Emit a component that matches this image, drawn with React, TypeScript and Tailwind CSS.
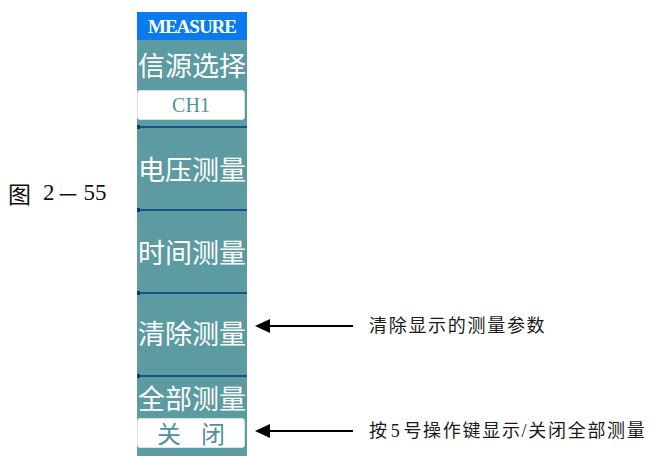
const teal = "bg-[#5c9ba1]";

function Sep() {
  return (
    <div className="relative h-[2px] w-full bg-[#1d4f8b]">
      <div className="absolute left-0 top-[-1px] h-[4px] w-[3px] bg-[#10386a]" />
    </div>
  );
}

function Label({ text }: { text: string }) {
  return (
    <div className="whitespace-nowrap text-center text-[27px] leading-none text-white [font-family:'Noto_Sans_CJK_SC',sans-serif]">
      {text}
    </div>
  );
}

function Arrow() {
  return (
    <svg width="98" height="20" viewBox="0 0 98 20" className="shrink-0">
      <polygon points="0,10 15,3 15,17" fill="#000" />
      <rect x="14" y="9" width="84" height="2" fill="#000" />
    </svg>
  );
}

function Note({ children }: { children: React.ReactNode }) {
  return (
    <div className="flex h-[20px] items-center">
      <Arrow />
      <span className="ml-[16px] whitespace-nowrap text-[18px] leading-none tracking-[1.7px] text-[#1a1a1a]">
        {children}
      </span>
    </div>
  );
}

export default function App() {
  return (
    <div className="h-[456px] w-[650px] overflow-hidden bg-white pt-[12px] [font-family:'Liberation_Serif','Noto_Sans_CJK_SC',serif]">
      {/* header */}
      <div className="flex">
        <div className="w-[137px]" />
        <div className="flex h-[28px] w-[110px] items-center justify-center bg-[#0a7af0]">
          <span className="text-[19px] font-bold leading-none tracking-[-1px] text-white">
            MEASURE
          </span>
        </div>
      </div>

      {/* 信源选择 */}
      <div className="flex">
        <div className="w-[137px]" />
        <div className={`flex h-[86px] w-[110px] flex-col ${teal}`}>
          <div className="flex h-[48px] items-center justify-center">
            <Label text="信源选择" />
          </div>
          <div className="mt-[2px] mr-[2px] flex h-[30px] items-center justify-center rounded-[3px] border border-[#d8e4e6] bg-white">
            <span className="text-[20px] leading-none text-[#4f9199]">CH1</span>
          </div>
        </div>
      </div>

      {/* 电压测量 */}
      <div className="flex">
        <div className="flex w-[137px] items-end pb-[4px] pl-[8px]">
          <div className="flex items-center text-[23px] leading-[24px] text-[#111]">
            <span className="[font-family:'Noto_Sans_CJK_SC',sans-serif]">图</span>
            <span className="ml-[12px]">2</span>
            <span className="ml-[2px] [font-family:'Noto_Sans_CJK_SC',sans-serif]">－</span>
            <span className="ml-[4px]">55</span>
          </div>
        </div>
        <div className={`flex h-[83px] w-[110px] flex-col ${teal}`}>
          <Sep />
          <div className="flex flex-1 items-center justify-center">
            <Label text="电压测量" />
          </div>
        </div>
      </div>

      {/* 时间测量 */}
      <div className="flex">
        <div className="w-[137px]" />
        <div className={`flex h-[83px] w-[110px] flex-col ${teal}`}>
          <Sep />
          <div className="flex flex-1 items-center justify-center">
            <Label text="时间测量" />
          </div>
        </div>
      </div>

      {/* 清除测量 */}
      <div className="flex">
        <div className="w-[137px]" />
        <div className={`flex h-[83px] w-[110px] flex-col ${teal}`}>
          <Sep />
          <div className="flex flex-1 items-center justify-center pb-[4px]">
            <Label text="清除测量" />
          </div>
        </div>
        <div className="pl-[8px] pt-[24px]">
          <Note>清除显示的测量参数</Note>
        </div>
      </div>

      {/* 全部测量 */}
      <div className="flex">
        <div className="w-[137px]" />
        <div className={`flex h-[81px] w-[110px] flex-col ${teal}`}>
          <Sep />
          <div className="flex h-[41px] items-center justify-center">
            <Label text="全部测量" />
          </div>
          <div className="mr-[2px] flex h-[30px] items-center justify-center gap-[20px] rounded-[3px] border border-[#d8e4e6] bg-white text-[24px] leading-none text-[#4f9199] [font-family:'Noto_Sans_CJK_SC',sans-serif]">
            <span>关</span>
            <span>闭</span>
          </div>
        </div>
        <div className="pl-[8px] pt-[46px]">
          <Note>
            按<span className="mx-[2px]">5</span>号操作键显示/关闭全部测量
          </Note>
        </div>
      </div>
    </div>
  );
}
